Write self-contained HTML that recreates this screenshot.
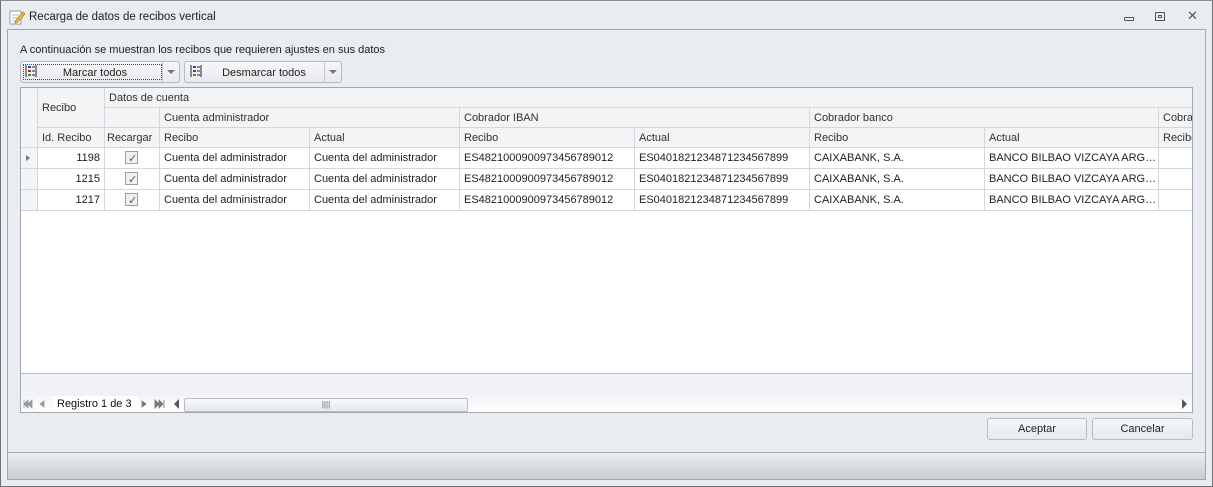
<!DOCTYPE html>
<html><head><meta charset="utf-8"><style>
*{box-sizing:border-box;margin:0;padding:0}
body{width:1213px;height:487px;position:relative;background:#e9ecf0;font-family:"Liberation Sans","DejaVu Sans",sans-serif;font-size:11px;color:#1e1e1e;overflow:hidden}
.abs{position:absolute}
#win{left:0;top:0;width:1213px;height:487px;border:1px solid #6f7479;border-top-color:#8a8e93}
#inner{left:7px;top:29px;width:1199px;height:423px;border:1px solid #a3a8ae;border-bottom:none}
#status{left:7px;top:452px;width:1199px;height:28px;border:1px solid #a3a8ae;background:linear-gradient(#eceef1,#c9ccd1)}
.btn{border:1px solid #b6bbc1;border-radius:3px;background:linear-gradient(#f6f7f8,#e6e9ed);text-align:center;line-height:20px}
.grid{left:20px;top:87px;width:1173px;height:326px;border:1px solid #a3a8ae;background:#fff;overflow:hidden}
.c{position:absolute;border-right:1px solid #d3d6da;border-bottom:1px solid #d3d6da;padding-left:4px;line-height:20px;white-space:nowrap;overflow:hidden;text-overflow:ellipsis}
.h{background:#f3f4f6;color:#303030}
.r{text-align:right;padding-right:4px}
.cb{position:absolute;left:20px;top:3px;width:13px;height:13px;border:1px solid #9aa0a6;background:#f0f0f0}
</style></head><body>
<div id="win" class="abs"></div>
<svg class="abs" style="left:9px;top:9px" width="16" height="16"><rect x="1" y="2" width="11" height="13" fill="#fff" stroke="#999"/><path d="M3 6h7M3 9h7M3 12h5" stroke="#bbb"/><path d="M7 11l7-8 2 2-7 8-3 1z" fill="#f2b632" stroke="#b07a10" stroke-width=".7"/></svg>
<div class="abs" style="left:29px;top:11px;font-size:11.5px">Recarga de datos de recibos vertical</div>
<div class="abs" style="left:1124px;top:17px;width:10px;height:4px;border:1px solid #555;border-radius:1px"></div>
<div class="abs" style="left:1155px;top:12px;width:10px;height:9px;border:1px solid #555"><div style="margin:2px auto;width:4px;height:3px;border:1px solid #555"></div></div>
<div class="abs" style="left:1187px;top:8px;font-size:13px;color:#555">✕</div>
<div id="inner" class="abs"></div>
<div id="status" class="abs"></div>
<div class="abs" style="left:20px;top:44px">A continuación se muestran los recibos que requieren ajustes en sus datos</div>
<div class="abs btn" style="left:20px;top:61px;width:160px;height:22px"></div>
<div class="abs" style="left:23px;top:64px;width:139px;height:16px;border:1px dotted #444"></div>
<div class="abs" style="left:162px;top:62px;width:1px;height:20px;background:#c5c9ce"></div>
<div class="abs" style="left:167px;top:70px;border:4px solid transparent;border-top-color:#777"></div>
<div class="abs" style="left:20px;top:64px;width:142px;text-align:center;line-height:18px;padding-left:8px">Marcar todos</div>
<div class="abs btn" style="left:184px;top:61px;width:158px;height:22px"></div>
<div class="abs" style="left:324px;top:62px;width:1px;height:20px;background:#c5c9ce"></div>
<div class="abs" style="left:329px;top:70px;border:4px solid transparent;border-top-color:#777"></div>
<div class="abs" style="left:190px;top:64px;width:134px;text-align:center;line-height:18px;padding-left:14px">Desmarcar todos</div>
<svg class="abs" style="left:25px;top:64px" width="12" height="14"><path d="M1 1v12M11 1v12" stroke="#222"/><rect x="3" y="2" width="3" height="2" fill="#2a3fc0"/><rect x="3" y="6" width="3" height="2" fill="#c02020"/><rect x="3" y="10" width="3" height="2" fill="#2a9a2a"/><path d="M7 3h3M7 7h3M7 11h3" stroke="#222"/></svg>
<svg class="abs" style="left:190px;top:64px" width="12" height="14"><path d="M1 1v12M11 1v12" stroke="#222"/><rect x="3" y="2" width="3" height="2" fill="#2a3fc0"/><rect x="3" y="6" width="3" height="2" fill="#c02020"/><rect x="3" y="10" width="3" height="2" fill="#2a9a2a"/><path d="M7 3h3M7 7h3M7 11h3" stroke="#222"/></svg>

<div class="abs grid">
<div class="c h" style="left:0;top:0;width:17px;height:60px"></div>
<div class="c h" style="left:17px;top:0;width:67px;height:40px;line-height:40px">Recibo</div>
<div class="c h" style="left:84px;top:0;width:1090px;height:20px">Datos de cuenta</div>
<div class="c h" style="left:84px;top:20px;width:55px;height:20px"></div>
<div class="c h" style="left:139px;top:20px;width:300px;height:20px">Cuenta administrador</div>
<div class="c h" style="left:439px;top:20px;width:350px;height:20px">Cobrador IBAN</div>
<div class="c h" style="left:789px;top:20px;width:349px;height:20px">Cobrador banco</div>
<div class="c h" style="left:1138px;top:20px;width:40px;height:20px;text-overflow:clip">Cobrador</div>
<div class="c h" style="left:17px;top:40px;width:67px;height:20px">Id. Recibo</div>
<div class="c h" style="left:84px;top:40px;width:55px;height:20px;padding-left:2px">Recargar</div>
<div class="c h" style="left:139px;top:40px;width:150px;height:20px">Recibo</div>
<div class="c h" style="left:289px;top:40px;width:150px;height:20px">Actual</div>
<div class="c h" style="left:439px;top:40px;width:175px;height:20px">Recibo</div>
<div class="c h" style="left:614px;top:40px;width:175px;height:20px">Actual</div>
<div class="c h" style="left:789px;top:40px;width:175px;height:20px">Recibo</div>
<div class="c h" style="left:964px;top:40px;width:174px;height:20px">Actual</div>
<div class="c h" style="left:1138px;top:40px;width:40px;height:20px;text-overflow:clip">Recibo</div>
<div class="abs" style="left:0;top:60px;width:1173px">
<div class="c h" style="left:0;top:0;width:17px;height:21px"><span style="position:absolute;left:5px;top:7px;border:3px solid transparent;border-left:4px solid #777"></span></div>
<div class="c r" style="left:17px;top:0;width:67px;height:21px">1198</div>
<div class="c" style="left:84px;top:0;width:55px;height:21px"><span class="cb"></span><span style="position:absolute;left:23px;top:1px;font-size:11px;color:#555">✓</span></div>
<div class="c" style="left:139px;top:0;width:150px;height:21px">Cuenta del administrador</div>
<div class="c" style="left:289px;top:0;width:150px;height:21px">Cuenta del administrador</div>
<div class="c" style="left:439px;top:0;width:175px;height:21px">ES4821000900973456789012</div>
<div class="c" style="left:614px;top:0;width:175px;height:21px">ES0401821234871234567899</div>
<div class="c" style="left:789px;top:0;width:175px;height:21px">CAIXABANK, S.A.</div>
<div class="c" style="left:964px;top:0;width:174px;height:21px">BANCO BILBAO VIZCAYA ARGEN...</div>
<div class="c" style="left:1138px;top:0;width:40px;height:21px"></div>
</div>
<div class="abs" style="left:0;top:81px;width:1173px">
<div class="c h" style="left:0;top:0;width:17px;height:21px"></div>
<div class="c r" style="left:17px;top:0;width:67px;height:21px">1215</div>
<div class="c" style="left:84px;top:0;width:55px;height:21px"><span class="cb"></span><span style="position:absolute;left:23px;top:1px;font-size:11px;color:#555">✓</span></div>
<div class="c" style="left:139px;top:0;width:150px;height:21px">Cuenta del administrador</div>
<div class="c" style="left:289px;top:0;width:150px;height:21px">Cuenta del administrador</div>
<div class="c" style="left:439px;top:0;width:175px;height:21px">ES4821000900973456789012</div>
<div class="c" style="left:614px;top:0;width:175px;height:21px">ES0401821234871234567899</div>
<div class="c" style="left:789px;top:0;width:175px;height:21px">CAIXABANK, S.A.</div>
<div class="c" style="left:964px;top:0;width:174px;height:21px">BANCO BILBAO VIZCAYA ARGEN...</div>
<div class="c" style="left:1138px;top:0;width:40px;height:21px"></div>
</div>
<div class="abs" style="left:0;top:102px;width:1173px">
<div class="c h" style="left:0;top:0;width:17px;height:21px"></div>
<div class="c r" style="left:17px;top:0;width:67px;height:21px">1217</div>
<div class="c" style="left:84px;top:0;width:55px;height:21px"><span class="cb"></span><span style="position:absolute;left:23px;top:1px;font-size:11px;color:#555">✓</span></div>
<div class="c" style="left:139px;top:0;width:150px;height:21px">Cuenta del administrador</div>
<div class="c" style="left:289px;top:0;width:150px;height:21px">Cuenta del administrador</div>
<div class="c" style="left:439px;top:0;width:175px;height:21px">ES4821000900973456789012</div>
<div class="c" style="left:614px;top:0;width:175px;height:21px">ES0401821234871234567899</div>
<div class="c" style="left:789px;top:0;width:175px;height:21px">CAIXABANK, S.A.</div>
<div class="c" style="left:964px;top:0;width:174px;height:21px">BANCO BILBAO VIZCAYA ARGEN...</div>
<div class="c" style="left:1138px;top:0;width:40px;height:21px"></div>
</div>
<div class="abs" style="left:0;top:285px;width:1173px;height:40px;border-top:1px solid #b8bcc1;background:#f1f2f5"></div>
<div class="abs" style="left:0;top:308px;width:1173px;height:17px;background:linear-gradient(#f4f5f7,#fff)"></div>
<div class="abs" style="left:32px;top:308px;width:85px;height:17px;background:#fff;line-height:17px;padding-left:4px;color:#111;white-space:nowrap">Registro 1 de 3</div>
<svg class="abs" style="left:2px;top:311px" width="30" height="10"><path d="M1 1v8M5 1l-4 4 4 4zM9 1l-4 4 4 4z M21 2l-4 3 4 3z" fill="#999" stroke="#999" stroke-width=".8"/></svg>
<svg class="abs" style="left:118px;top:311px" width="32" height="10"><path d="M3 2l4 3-4 3z M16 1l4 4-4 4zM20 1l4 4-4 4zM25 1v8" fill="#777" stroke="#777" stroke-width=".8"/></svg>
<svg class="abs" style="left:152px;top:311px" width="8" height="10"><path d="M6 0v10L1 5z" fill="#555"/></svg>
<div class="abs" style="left:163px;top:310px;width:284px;height:14px;border:1px solid #b8bcc1;border-radius:2px;background:linear-gradient(#f7f8f9,#e7e9ec);text-align:center;font-size:8px;line-height:12px;color:#666">||||</div>
<svg class="abs" style="left:1160px;top:311px" width="8" height="10"><path d="M1 0v10L6 5z" fill="#555"/></svg>
</div>
<div class="abs btn" style="left:987px;top:418px;width:100px;height:22px">Aceptar</div>
<div class="abs btn" style="left:1092px;top:418px;width:101px;height:22px">Cancelar</div>
</body></html>
